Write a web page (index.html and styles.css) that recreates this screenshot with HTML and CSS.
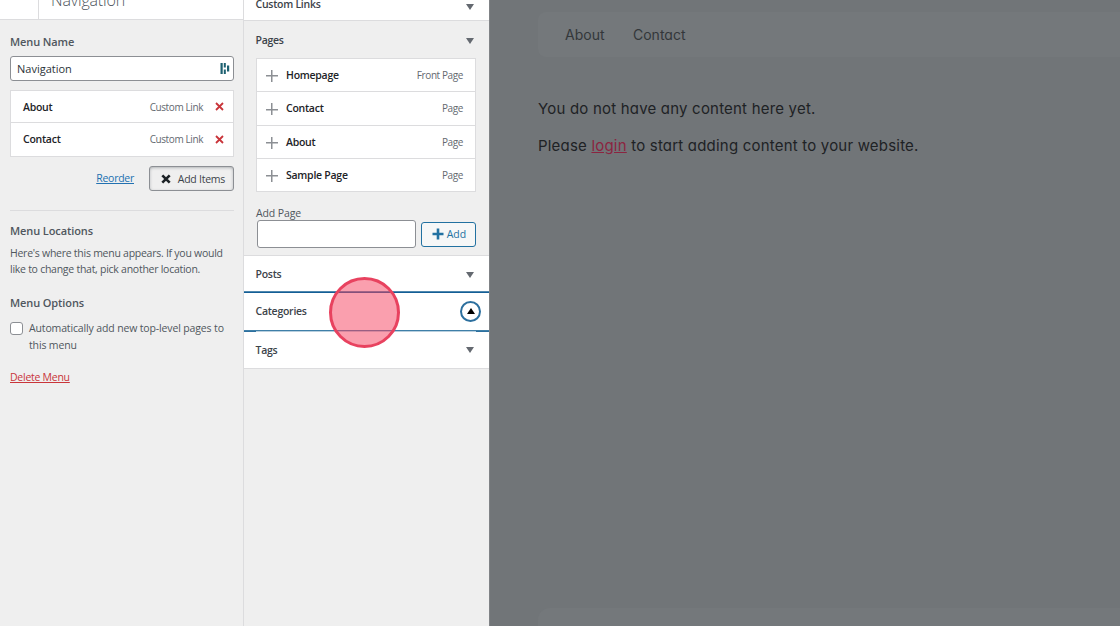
FILE: index.html
```html
<!DOCTYPE html>
<html lang="en">
<head>
  <meta charset="UTF-8">
  <title>Customize: Navigation</title>
  <link rel="stylesheet" href="styles.css">
</head>
<body>
  <aside class="sidebar">
    <header class="panel-title">
      <div class="back"></div>
      <h1>Navigation</h1>
    </header>

    <form class="menu-form">
      <label class="heading" for="menuName">Menu Name</label>
      <div class="name-box">
        <input type="text" id="menuName" value="Navigation">
        <svg class="dash-icon" width="10" height="13" viewBox="0 0 10 13" fill="#1d6070">
          <rect x="0.5" y="1" width="2.2" height="11"/>
          <rect x="3.8" y="1" width="2" height="4.5"/>
          <rect x="3.8" y="7.5" width="2" height="4.5"/>
          <rect x="7" y="3.5" width="2.2" height="6"/>
        </svg>
      </div>

      <ul class="menu-items">
        <li><b>About</b><span>Custom Link</span><svg class="remove" width="9" height="9" viewBox="0 0 9 9"><path d="M1 1l7 7M8 1l-7 7"/></svg></li>
        <li><b>Contact</b><span>Custom Link</span><svg class="remove" width="9" height="9" viewBox="0 0 9 9"><path d="M1 1l7 7M8 1l-7 7"/></svg></li>
      </ul>

      <div class="actions">
        <a class="reorder" href="#">Reorder</a>
        <button type="button" class="add-items">
          <svg width="10" height="10" viewBox="0 0 10 10"><path d="M1.3 1.3l7.4 7.4M8.7 1.3l-7.4 7.4"/></svg>
          <span>Add Items</span>
        </button>
      </div>

      <h2 class="heading">Menu Locations</h2>
      <p class="description">Here's where this menu appears. If you would<br>like to change that, pick another location.</p>

      <h2 class="heading">Menu Options</h2>
      <label class="auto-add">
        <input type="checkbox">
        <span>Automatically add new top-level pages to<br>this menu</span>
      </label>
      <a class="delete" href="#">Delete Menu</a>
    </form>
  </aside>

  <section class="available">
    <div class="row custom-links"><h3>Custom Links</h3><i class="arrow"></i></div>

    <div class="pages">
      <div class="row pages-row"><h3>Pages</h3><i class="arrow"></i></div>
      <ul class="page-list">
        <li><i class="plus"></i><b>Homepage</b><span>Front Page</span></li>
        <li><i class="plus"></i><b>Contact</b><span>Page</span></li>
        <li><i class="plus"></i><b>About</b><span>Page</span></li>
        <li><i class="plus"></i><b>Sample Page</b><span>Page</span></li>
      </ul>
      <label class="add-label" for="newPage">Add Page</label>
      <div class="add-page">
        <input type="text" id="newPage">
        <button type="button" class="add-button">
          <svg width="12" height="12" viewBox="0 0 12 12"><path d="M6 .5v11M.5 6h11"/></svg>
          <span>Add</span>
        </button>
      </div>
    </div>

    <div class="row posts"><h3>Posts</h3><i class="arrow"></i></div>
    <div class="row categories">
      <h3>Categories</h3>
      <div class="toggle"><i class="arrow up"></i></div>
      <div class="pointer"></div>
    </div>
    <div class="row tags"><h3>Tags</h3><i class="arrow"></i></div>
  </section>

  <main class="preview">
    <nav>
      <a class="nav-about">About</a>
      <a class="nav-contact">Contact</a>
    </nav>
    <div class="content">
      <p>You do not have any content here yet.</p>
      <p>Please <a href="#">login</a> to start adding content to your website.</p>
    </div>
    <footer></footer>
  </main>
</body>
</html>
```
FILE: styles.css
```css
* {
  box-sizing: border-box;
}
body {
  display: flex;
  height: 626px;
  margin: 0;
  overflow: hidden;
  background: #efefef;
  color: #50575e;
  font-family: "Open Sans", "Noto Sans", sans-serif;
  font-size: 10.5px;
  letter-spacing: -0.26px;
}
h1, h2, h3, p, ul {
  margin: 0;
  padding: 0;
}
ul {
  list-style: none;
}
b, h3, .heading {
  font-weight: 600;
}
input, button {
  font-family: inherit;
  letter-spacing: inherit;
}

/* left panel */
.sidebar {
  width: 244px;
  border-right: 1px solid #dcdcde;
}
.panel-title {
  display: flex;
  height: 20px;
  background: #fff;
  border-bottom: 1px solid #dcdcde;
}
.back {
  width: 39px;
  border-right: 1px solid #dcdcde;
}
.panel-title h1 {
  margin: -11px 0 0 12px;
  font-size: 16px;
  font-weight: 300;
  line-height: 22px;
  letter-spacing: -0.15px;
}
.menu-form {
  display: flex;
  flex-direction: column;
  padding: 13px 9px 0 10px;
}
.heading {
  font-size: 11px;
  line-height: 18px;
  letter-spacing: -0.1px;
}
.name-box {
  display: flex;
  align-items: center;
  height: 25px;
  margin-top: 5px;
  padding-right: 3px;
  background: #fff;
  border: 1px solid #8c8f94;
  border-radius: 3px;
}
.name-box input {
  flex: 1;
  min-width: 0;
  padding: 0 6px;
  border: 0;
  background: none;
  color: #2c3338;
  font-size: 11px;
  letter-spacing: 0;
}
.menu-items {
  margin-top: 9px;
  background: #fff;
  border: 1px solid #dcdcde;
}
.menu-items li {
  display: flex;
  align-items: center;
  height: 31px;
  padding: 0 9px 0 12px;
}
.menu-items li + li {
  height: 34px;
  padding-bottom: 1px;
  border-top: 1px solid #dcdcde;
}
.menu-items b, .page-list b {
  flex: 1;
  color: #1d2327;
}
.menu-items span, .page-list span {
  color: #646970;
  font-size: 10px;
  letter-spacing: -0.4px;
}
.remove {
  margin-left: 12px;
  fill: none;
  stroke: #c9353a;
  stroke-width: 1.8;
}
.actions {
  display: flex;
  justify-content: flex-end;
  height: 54px;
  padding-top: 9px;
  border-bottom: 1px solid #dcdcde;
  margin-bottom: 11px;
}
.reorder {
  margin-right: 15px;
  line-height: 24px;
  color: #2271b1;
}
.add-items {
  display: flex;
  align-items: center;
  justify-content: space-between;
  width: 85px;
  height: 25px;
  padding: 0 8px 0 11px;
  background: #efefef;
  border: 1px solid #8c8f94;
  border-radius: 3px;
  box-shadow: inset 0 1px 4px -2px #50575e;
  color: #3c434a;
  font-size: 10.5px;
}
.add-items svg {
  stroke: #1d2327;
  stroke-width: 2.6;
}
.description {
  margin: 5px 0 17px;
  line-height: 16px;
  white-space: nowrap;
}
.auto-add {
  display: flex;
  margin-top: 8px;
  line-height: 17px;
  letter-spacing: -0.14px;
  white-space: nowrap;
}
.auto-add input {
  flex: none;
  appearance: none;
  width: 13px;
  height: 13px;
  margin: 2px 6px 0 0;
  background: #fff;
  border: 1px solid #8c8f94;
  border-radius: 3px;
}
.delete {
  align-self: flex-start;
  margin-top: 15px;
  line-height: 17px;
  color: #c9353a;
}

/* available items */
.available {
  width: 245px;
}
.row {
  display: flex;
  align-items: center;
  justify-content: space-between;
  padding: 0 15px 0 11.5px;
  background: #fff;
  color: #3c434a;
}
.row h3 {
  font-size: 10.5px;
}
.arrow {
  width: 0;
  border: 4px solid transparent;
  border-top: 6px solid #646970;
  border-bottom: 0;
}
.arrow.up {
  border-top: 0;
  border-bottom: 6px solid #000;
}
.custom-links {
  height: 21px;
  padding-bottom: 12px;
  border-bottom: 1px solid #dcdcde;
}
.custom-links .arrow {
  margin-top: 5px;
}
.pages {
  height: 235px;
  padding: 0 12px;
  border-bottom: 1px solid #dcdcde;
}
.pages-row {
  height: 37px;
  margin: 0 -12px;
  background: none;
}
.pages-row .arrow {
  margin-top: 2px;
}
.page-list {
  width: 220px;
  background: #fff;
  border: 1px solid #dcdcde;
}
.page-list li {
  display: flex;
  align-items: center;
  height: 33.3px;
  padding: 0 12px 0 9px;
}
.page-list li:first-child {
  height: 32.3px;
}
.page-list li + li {
  border-top: 1px solid #dcdcde;
}
.plus {
  width: 12px;
  height: 12px;
  margin: 2px 8px 0 0;
  background: linear-gradient(#8c8f94, #8c8f94) 50% 50% / 12px 1.5px no-repeat,
    linear-gradient(#8c8f94, #8c8f94) 50% 50% / 1.5px 12px no-repeat;
}
.add-label {
  display: block;
  margin-top: 15px;
  line-height: 13px;
  letter-spacing: -0.12px;
}
.add-page {
  display: flex;
  align-items: center;
  justify-content: space-between;
  width: 220px;
  padding-left: 1px;
}
.add-page input {
  width: 159px;
  height: 28px;
  background: #fff;
  border: 1px solid #8c8f94;
  border-radius: 3px;
}
.add-button {
  display: flex;
  align-items: center;
  justify-content: space-between;
  width: 55px;
  height: 25px;
  padding: 0 9px 0 10px;
  background: #f6f7f7;
  border: 1px solid #2271a1;
  border-radius: 3px;
  color: #2271a1;
  font-size: 10.5px;
  letter-spacing: -0.1px;
}
.add-button svg {
  stroke: #2271a1;
  stroke-width: 2.6;
}
.posts {
  height: 36px;
}
.posts .arrow, .tags .arrow {
  margin-top: 1px;
}
.categories {
  position: relative;
  height: 39px;
  padding: 0 8px 1px 11.5px;
  border-top: 1px solid #135e96;
  border-bottom: 1px solid #3f7fa8;
  box-shadow: 0 -1px 0 #5088ae;
}
.toggle {
  display: flex;
  align-items: center;
  justify-content: center;
  width: 21px;
  height: 21px;
  border: 2px solid #2c6f9e;
  border-radius: 50%;
}
.tags {
  height: 38px;
  border-bottom: 1px solid #dcdcde;
  background: linear-gradient(90deg, #2c6f9e 12px, #b8cfde 12px 232px, #2c6f9e 232px) top / 100% 1px no-repeat #fff;
}
.pointer {
  position: absolute;
  z-index: 1;
  left: 84.5px;
  top: -16px;
  width: 71px;
  height: 71px;
  background: rgba(245, 63, 93, 0.5);
  border: 3px solid #e8425f;
  border-radius: 50%;
}

/* site preview */
.preview {
  display: flex;
  flex-direction: column;
  width: 631px;
  padding: 12px 0 0 48px;
  background: #717578;
  border-left: 1px solid #808386;
  color: #1e2225;
  font-family: Inter, sans-serif;
  font-feature-settings: "cv11";
  letter-spacing: 0;
}
.preview nav {
  display: flex;
  height: 45px;
  padding-left: 27px;
  background: #74787b;
  border-radius: 8px 0 0 8px;
  color: #33373a;
  font-size: 14px;
  line-height: 45px;
}
.nav-about {
  width: 68px;
}
.content {
  flex: 1;
  padding-top: 34px;
  font-size: 15px;
  letter-spacing: 0.2px;
  line-height: 36.5px;
  white-space: nowrap;
}
.content a {
  color: #8b2440;
}
.preview footer {
  height: 18px;
  background: #74787b;
  border-radius: 12px 0 0 0;
}
```
